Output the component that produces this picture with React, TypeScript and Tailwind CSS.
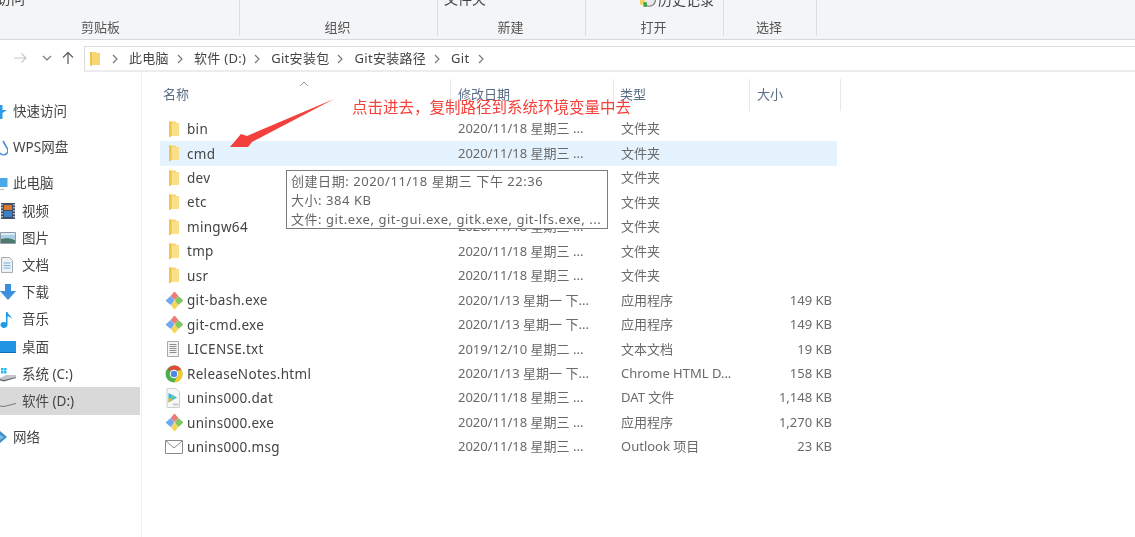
import React from "react";

const Folder = () => (
  <svg width="12" height="17" viewBox="0 0 12 17" className="shrink-0">
    <path d="M1 .5h6.500l1 1.500h2.500v13H3l-2 1.500z" fill="#f8d670" />
    <path d="M3.500 2.500H11v12.500H3.500z" fill="#fbe08c" />
    <path d="M1 .5h2.500V15L1 16.500z" fill="#f0c548" />
  </svg>
);

const GitIcon = () => (
  <svg width="19" height="19" viewBox="0 0 19 19" className="shrink-0">
    <path d="M9.500 1.500 L12.500 5 L9.500 8 L6.500 5 Z" fill="#ee7d7a" stroke="#ee7d7a" strokeLinejoin="round" strokeWidth="1.400" />
    <path d="M13.500 6 L17.500 9.500 L13.500 13 L10.500 9.500 Z" fill="#84c660" stroke="#84c660" strokeLinejoin="round" strokeWidth="1.400" />
    <path d="M9.500 11 L12.500 14 L9.500 17.500 L6.500 14 Z" fill="#f6d657" stroke="#f6d657" strokeLinejoin="round" strokeWidth="1.400" />
    <path d="M5.500 6 L8.500 9.500 L5.500 13 L1.500 9.500 Z" fill="#71a9ef" stroke="#71a9ef" strokeLinejoin="round" strokeWidth="1.400" />
  </svg>
);

const TextFile = () => (
  <svg width="16" height="18" viewBox="0 0 16 18" className="shrink-0">
    <path d="M2.500 1.500h11v15h-11z" fill="#f4f4f4" stroke="#a8a8a8" />
    <path d="M4.500 4.500h7M4.500 6.500h7M4.500 8.500h7M4.500 10.500h7M4.500 12.500h7" stroke="#8c8c8c" />
  </svg>
);

const Chrome = () => (
  <svg width="18" height="18" viewBox="0 0 18 18" className="shrink-0">
    <circle cx="9" cy="9" r="8.500" fill="#4caf50" />
    <path d="M9 .5a8.500 8.500 0 0 1 7.400 4.300L9 5.500H2.600A8.500 8.500 0 0 1 9 .5z" fill="#e2473c" />
    <path d="M16.400 4.800A8.500 8.500 0 0 1 9 17.500l3.600-6.500L12.500 6z" fill="#f8c92e" />
    <circle cx="9" cy="9" r="4.200" fill="#fff" />
    <circle cx="9" cy="9" r="3.200" fill="#4a87ea" />
  </svg>
);

const DatIcon = () => (
  <svg width="16" height="20" viewBox="0 0 16 20" className="shrink-0">
    <path d="M2 .5h9l3.500 3.500v15.500H2z" fill="#f7f7f7" stroke="#cfcfcf" />
    <path d="M3.500 5 L12 9.500 L3.500 14.500 Z" fill="#2fb6e0" />
    <path d="M3.500 9.500 L8 12 L3.500 14.500 Z" fill="#f2b92f" />
    <path d="M6 7.500 L9.500 9.500 L6 11.500 Z" fill="#8ccf3f" />
    <path d="M8 15.500h5.500v2H8z" fill="#c9c9c9" />
  </svg>
);

const Mail = () => (
  <svg width="18" height="14" viewBox="0 0 18 14" className="shrink-0">
    <path d="M.5.5h17v13H.5z" fill="#fff" stroke="#8a8a8a" />
    <path d="M1 1l8 7 8-7" fill="none" stroke="#8a8a8a" />
  </svg>
);

type Row = { icon: React.ReactNode; name: string; date: string; type: string; size?: string; selected?: boolean };

const d3 = "2020/11/18 星期三 ...";
const d1 = "2020/1/13 星期一 下...";

const rows: Row[] = [
  { icon: <Folder />, name: "bin", date: d3, type: "文件夹" },
  { icon: <Folder />, name: "cmd", date: d3, type: "文件夹", selected: true },
  { icon: <Folder />, name: "dev", date: d3, type: "文件夹" },
  { icon: <Folder />, name: "etc", date: d3, type: "文件夹" },
  { icon: <Folder />, name: "mingw64", date: d3, type: "文件夹" },
  { icon: <Folder />, name: "tmp", date: d3, type: "文件夹" },
  { icon: <Folder />, name: "usr", date: d3, type: "文件夹" },
  { icon: <GitIcon />, name: "git-bash.exe", date: d1, type: "应用程序", size: "149 KB" },
  { icon: <GitIcon />, name: "git-cmd.exe", date: d1, type: "应用程序", size: "149 KB" },
  { icon: <TextFile />, name: "LICENSE.txt", date: "2019/12/10 星期二 ...", type: "文本文档", size: "19 KB" },
  { icon: <Chrome />, name: "ReleaseNotes.html", date: d1, type: "Chrome HTML D...", size: "158 KB" },
  { icon: <DatIcon />, name: "unins000.dat", date: d3, type: "DAT 文件", size: "1,148 KB" },
  { icon: <GitIcon />, name: "unins000.exe", date: d3, type: "应用程序", size: "1,270 KB" },
  { icon: <Mail />, name: "unins000.msg", date: d3, type: "Outlook 项目", size: "23 KB" },
];

const side: { icon: React.ReactNode; label: string; child?: boolean; sel?: boolean; gap?: boolean }[] = [
  { icon: <svg width="8" height="16" viewBox="0 0 8 16"><path d="M0 1h2.500v5H7L2.500 9v6H0z" fill="#2f9be8" /></svg>, label: "快速访问" },
  { icon: <svg width="8" height="16" viewBox="0 0 8 16"><path d="M3 1 L7 8 A3.500 3.500 0 0 1 0 13" fill="none" stroke="#4f8fdc" strokeWidth="1.600" /></svg>, label: "WPS网盘", gap: true },
  { icon: <svg width="8" height="16" viewBox="0 0 8 16"><path d="M0 2h7.500v9H0z" fill="#4aa8e6" /><path d="M0 13h4v1H0z" fill="#bbb" /></svg>, label: "此电脑", gap: true },
  { icon: <svg width="16" height="18" viewBox="0 0 16 18"><path d="M1 1h14v16H1z" fill="#3f4f66" /><path d="M4 3h8v5H4z" fill="#d8792f" /><path d="M4 9h8v6H4z" fill="#3c7fc4" /><path d="M2 2v14M14 2v14" stroke="#cfd6df" strokeDasharray="1.500 1.500" strokeWidth="1.500" /></svg>, label: "视频", child: true },
  { icon: <svg width="16" height="14" viewBox="0 0 16 14"><path d="M.5 1.500h15v11H.5z" fill="#dfeaf3" stroke="#8e9ba8" /><path d="M1 4h14v4H1z" fill="#a9d0e8" /><path d="M1 8c5-1.500 9-1 14 1v3H1z" fill="#4d7a6a" /></svg>, label: "图片", child: true },
  { icon: <svg width="14" height="18" viewBox="0 0 14 18"><path d="M1.500 1.500h8l3 3v12h-11z" fill="#eef2f5" stroke="#a5adb5" /><path d="M3.500 7h7M3.500 9.500h7M3.500 12h7" stroke="#6fb1dc" /></svg>, label: "文档", child: true },
  { icon: <svg width="16" height="18" viewBox="0 0 16 18"><path d="M5 1h6v7h5l-8 9-8-9h5z" fill="#3d8fdd" /></svg>, label: "下载", child: true },
  { icon: <svg width="14" height="18" viewBox="0 0 14 18"><path d="M6 1h1.500c.5 3 4 3.500 4 7-1-2-2.500-2.500-4-2.500V14a3.500 3 0 1 1-1.500-2.500z" fill="#1f9be6" /></svg>, label: "音乐", child: true },
  { icon: <svg width="16" height="12" viewBox="0 0 16 12"><path d="M0 0h16v11H0z" fill="#1f95e4" /><path d="M0 11h16v1H0z" fill="#0c6fb8" /></svg>, label: "桌面", child: true },
  { icon: <svg width="16" height="16" viewBox="0 0 16 16"><path d="M1 2h2.500v2.500H1zM4 2h2.500v2.500H4zM1 5h2.500v2.500H1zM4 5h2.500v2.500H4z" fill="#2fb8ee" /><path d="M0 12l6-3h10v2L4 15 0 14z" fill="#c4c7ca" /><path d="M0 13l4 1 12-3v1L4 15.500 0 14.500z" fill="#6a6d70" /></svg>, label: "系统 (C:)", child: true },
  { icon: <svg width="16" height="16" viewBox="0 0 16 16"><path d="M0 11l6-3h10v2L4 13 0 12.500z" fill="#d6d8da" /><path d="M0 12.500l4 .5 12-3v1L4 14 0 13.500z" fill="#77797c" /></svg>, label: "软件 (D:)", child: true, sel: true },
  { icon: <svg width="8" height="16" viewBox="0 0 8 16"><path d="M0 2 L7 8 L0 14z" fill="#3f8fc9" /><path d="M0 6 L4 8 L0 11z" fill="#7cc0e8" /></svg>, label: "网络", gap: true },
];

const crumbs = ["此电脑", "软件 (D:)", "Git安装包", "Git安装路径", "Git"];

const Sep = () => (
  <svg width="6" height="10" viewBox="0 0 6 10" className="shrink-0"><path d="M1 1l4 4-4 4" fill="none" stroke="#7a7a7a" strokeWidth="1.200" /></svg>
);

function RibbonGroup({ top, label, className }: { top?: React.ReactNode; label: string; className: string }) {
  return (
    <div className={`h-[36px] border-r border-[#dcdde0] flex flex-col items-center overflow-hidden ${className}`}>
      <div className="h-[18px] w-full text-[14px] leading-[14px] -mt-[8px] text-[#444] whitespace-nowrap">{top}</div>
      <div className="text-[13px] leading-[18px] mt-[9px] text-[#555]">{label}</div>
    </div>
  );
}

export default function App() {
  return (
    <div className="relative w-[1135px] h-[537px] overflow-hidden bg-white text-[#444] font-['Noto_Sans','Noto_Sans_CJK_SC',sans-serif] blur-[0.35px]">
      {/* Ribbon */}
      <div className="h-[40px] bg-[#f4f5f7] border-b border-[#d9d9d9] flex overflow-hidden">
        <RibbonGroup className="w-[240px] pr-[38px]" label="剪贴板" top={<span className="block text-left -ml-[3px]">访问</span>} />
        <RibbonGroup className="w-[198px] pr-[2px]" label="组织" />
        <RibbonGroup className="w-[148px] pr-[2px]" label="新建" top={<span className="block pl-[6px]">文件夹</span>} />
        <RibbonGroup
          className="w-[138px] pr-[2px]"
          label="打开"
          top={
            <span className="flex items-center pl-[54px] gap-[2px]">
              <svg width="16" height="16" viewBox="0 0 14 14" className="shrink-0"><circle cx="8" cy="7" r="5.500" fill="#e8e8e8" stroke="#777" /><path d="M0 3h4v8H0z" fill="#f0cf5f" /><path d="M3 9h3v4H3z" fill="#3fa03f" /></svg>
              <span>历史记录</span>
            </span>
          }
        />
        <RibbonGroup className="w-[93px] pr-[2px]" label="选择" />
      </div>

      {/* Address bar */}
      <div className="h-[32px] pt-[6px] flex items-stretch">
        <div className="w-[84px] flex items-center pl-[13px] pb-[2px]">
          <svg width="14" height="12" viewBox="0 0 14 12" className="shrink-0"><path d="M1 6h12M8.500 1.500L13 6l-4.500 4.500" fill="none" stroke="#c8c8c8" strokeWidth="1.200" /></svg>
          <svg width="10" height="6" viewBox="0 0 10 6" className="shrink-0 ml-[15px]"><path d="M1 1l4 4 4-4" fill="none" stroke="#7a7a7a" strokeWidth="1.200" /></svg>
          <svg width="12" height="14" viewBox="0 0 12 14" className="shrink-0 ml-[10px]"><path d="M6 13V1.500M1 6.500l5-5 5 5" fill="none" stroke="#666" strokeWidth="1.300" /></svg>
        </div>
        <div className="flex-1 border-t border-l border-[#dcdcdc] border-b-2 border-b-[#ececec] flex items-center pl-[4px] text-[13px] tracking-[0.3px] text-[#444]">
          <svg width="13" height="16" viewBox="0 0 13 16" className="shrink-0"><path d="M1 1h6l1 1h3v12H3l-2 1z" fill="#f7d774" /><path d="M1 1h2v14l-2-.5z" fill="#edc34b" /></svg>
          <span className="ml-[10px]"><Sep /></span>
          {crumbs.map((c) => (
            <React.Fragment key={c}>
              <span className="ml-[11px] mr-[8px] whitespace-nowrap">{c}</span>
              <Sep />
            </React.Fragment>
          ))}
        </div>
      </div>

      {/* Body */}
      <div className="flex h-[465px]">
        <nav className="w-[142px] shrink-0 border-r border-[#f1f1f1] pt-[26px] text-[13.5px]">
          {side.map((s) => (
            <div
              key={s.label}
              className={`h-[27.2px] w-[140px] flex items-center whitespace-nowrap ${s.gap ? "mt-[8.8px]" : ""} ${s.sel ? "bg-[#d9d9d9]" : ""}`}
            >
              <span className={`${s.child ? "w-[22px]" : "w-[13px]"} shrink-0 flex items-center`}>{s.icon}</span>
              <span>{s.label}</span>
            </div>
          ))}
        </nav>
        <main className="flex-1 relative">
          {/* header */}
          <div className="relative h-[32px] mt-[7px] flex items-center text-[13px] text-[#5a6d86]">
            <div className="w-[309px] h-full pl-[21px] flex items-center border-r border-[#e8e8e8]">名称</div>
            <div className="w-[163px] h-full pl-[7px] flex items-center border-r border-[#e8e8e8]">修改日期</div>
            <div className="w-[136px] h-full pl-[6px] flex items-center border-r border-[#e8e8e8]">类型</div>
            <div className="w-[91px] h-full pl-[7px] flex items-center border-r border-[#e8e8e8]">大小</div>
            <svg width="10" height="6" viewBox="0 0 10 6" className="absolute left-[157px] top-[2px]"><path d="M1 5l4-4 4 4" fill="none" stroke="#9a9a9a" /></svg>
          </div>
          {/* rows */}
          <div className="ml-[18px] w-[677px] mt-[6px]">
            {rows.map((r) => (
              <div key={r.name} className={`h-[24.46px] flex items-center whitespace-nowrap ${r.selected ? "bg-[#e5f3ff]" : ""}`}>
                <span className={`w-[27px] shrink-0 flex items-center ${r.type === "文件夹" ? "pl-[8px]" : "pl-[5px]"}`}>{r.icon}</span>
                <span className="w-[271px] shrink-0 text-[13.5px] tracking-[0.3px]">{r.name}</span>
                <span className="w-[163px] shrink-0 text-[13px] text-[#6a6a6a]">{r.date}</span>
                <span className="w-[184px] shrink-0 text-[13px] text-[#6a6a6a] relative">
                  {r.type}
                  {r.size && <span className="absolute left-[130px] w-[81px] text-right">{r.size}</span>}
                </span>
              </div>
            ))}
          </div>
        </main>
      </div>

      {/* Tooltip */}
      <div className="absolute left-[286px] top-[170px] w-[322px] h-[59px] bg-white border border-[#7c7c7c] pl-[4px] pt-[1px] text-[13px] tracking-[0.55px] leading-[19px] text-[#666] whitespace-nowrap">
        <div>创建日期: 2020/11/18 星期三 下午 22:36</div>
        <div>大小: 384 KB</div>
        <div>文件: git.exe, git-gui.exe, gitk.exe, git-lfs.exe, ...</div>
      </div>

      {/* Annotation */}
      <svg width="110" height="52" viewBox="0 0 110 52" className="absolute left-[228px] top-[98px]">
        <path d="M106 1 L19 38 L13 36 L2 49 L20 49 L24 44 Z" fill="#f4403c" />
      </svg>
      <div className="absolute left-[352px] top-[96px] text-[15.5px] leading-[22px] text-[#f5403a] whitespace-nowrap">
        点击进去，复制路径到系统环境变量中去
      </div>
    </div>
  );
}
